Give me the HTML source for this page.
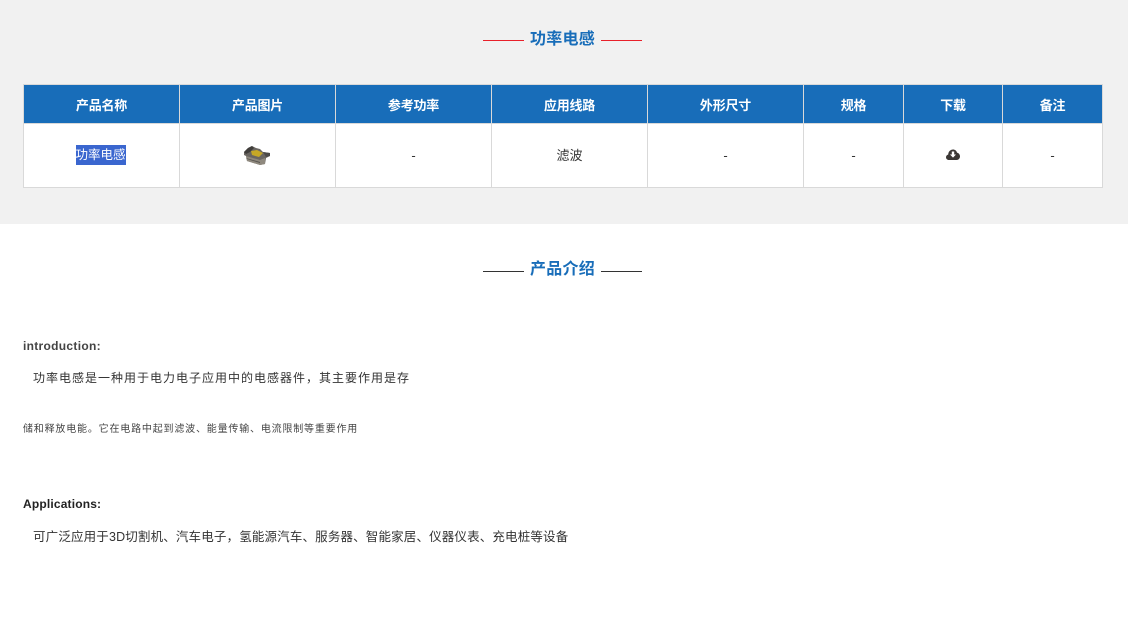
<!DOCTYPE html>
<html lang="zh-CN">
<head>
<meta charset="utf-8">
<style>
*{box-sizing:border-box;margin:0;padding:0}
html,body{width:1128px;height:619px;overflow:hidden;background:#fff}
body{position:relative;font-family:"Liberation Sans","WenQuanYi Zen Hei","Noto Sans CJK SC",sans-serif;color:#333}
.abs{position:absolute;white-space:nowrap}
#top{position:absolute;left:0;top:0;width:1128px;height:224px;background:#f1f1f1}
.title{position:absolute;left:530px;white-space:nowrap;font-size:16px;font-weight:bold;color:#186db9;line-height:24px;letter-spacing:.25px}
.ln{position:absolute;width:41px;height:1px}
table{position:absolute;left:23px;top:84px;width:1080px;height:104px;border-collapse:collapse;table-layout:fixed;background:#fff}
th,td{border:1px solid #d9d9d9;text-align:center;vertical-align:middle;font-size:13px}
th{background:#186db9;color:#fff;font-weight:bold;height:39px;font-size:13px;letter-spacing:-.2px}
td{color:#333;height:64px;font-size:13px}
.sel{background:#3a66cf;color:#fff;display:inline-block;line-height:20px;height:20px;font-size:12.5px;width:50px;position:relative;top:-1px;left:-1px;white-space:nowrap}
.up{position:relative;top:-1px}
</style>
</head>
<body>
<div id="top"></div>
<div class="title" style="top:28px">功率电感</div>
<div class="ln" style="left:483px;top:40px;background:#e8202a"></div>
<div class="ln" style="left:601px;top:40px;background:#e8202a"></div>

<table>
<colgroup>
<col style="width:156px"><col style="width:156px"><col style="width:156px"><col style="width:156px"><col style="width:156px"><col style="width:100px"><col style="width:99px"><col style="width:100px">
</colgroup>
<tr><th>产品名称</th><th>产品图片</th><th>参考功率</th><th>应用线路</th><th>外形尺寸</th><th>规格</th><th>下载</th><th>备注</th></tr>
<tr>
<td><span class="sel">功率电感</span></td>
<td>
<svg width="28" height="21" viewBox="0 0 28 21" style="display:block;margin:0 auto;position:relative;left:-1px">
<path d="M1 7 L5 3 L9 1 L13 3 L17 4 L20 7 L27 8 L27 11 L23 13 L22 19 L17 20 L4 16 L3 11 L1 10Z" fill="#6a6661"/>
<path d="M3 11 L17 15 L22 13 L22 19 L17 20 L4 16Z" fill="#8f897e"/>
<path d="M3 13 L17 17 L17 18 L4 14Z" fill="#55524e"/>
<path d="M8 6 L14 5 L20 8 L16 12 L9 10Z" fill="#c6a826"/>
<path d="M1 7 L5 3 L9 1 L11 3 L7 7 L3 9Z" fill="#3f3d3b"/>
<path d="M20 7 L27 8 L27 11 L23 12Z" fill="#4c4a48"/>
</svg>
</td>
<td>-</td>
<td><span class="up">滤波</span></td>
<td>-</td>
<td>-</td>
<td>
<svg width="14" height="11" viewBox="0 0 14 11" style="display:block;margin:0 auto;position:relative;top:-1px">
<path d="M3 11 C1 11 0 9.6 0 8.2 C0 6.8 1 5.8 2.2 5.6 C2.3 2.6 4.5 0.5 7 0.5 C9 0.5 10.5 1.7 11 3.6 C12.8 4 14 5.6 14 7.4 C14 9.4 12.6 11 10.6 11Z" fill="#3b3735"/>
<path d="M5.8 2.5 H8.2 V5.5 H10 L7 8.6 L4 5.5 H5.8Z" fill="#fff"/>
</svg>
</td>
<td>-</td>
</tr>
</table>

<div class="title" style="top:258px">产品介绍</div>
<div class="ln" style="left:483px;top:271px;background:#333"></div>
<div class="ln" style="left:601px;top:271px;background:#333"></div>

<div class="abs" style="left:23px;top:337px;font-size:12px;font-weight:bold;line-height:18px;letter-spacing:.3px;color:#444">introduction:</div>
<div class="abs" style="left:33px;top:369px;font-size:12px;line-height:18px;letter-spacing:1px;color:#333">功率电感是一种用于电力电子应用中的电感器件，其主要作用是存</div>
<div class="abs" style="left:23px;top:422px;font-size:10px;line-height:16px;letter-spacing:.81px;color:#444">储和释放电能。它在电路中起到滤波、能量传输、电流限制等重要作用</div>
<div class="abs" style="left:23px;top:495px;font-size:12px;font-weight:bold;line-height:18px;letter-spacing:.17px;color:#222">Applications:</div>
<div class="abs" style="left:33px;top:528px;font-size:12.5px;line-height:18px;letter-spacing:.16px;color:#333">可广泛应用于3D切割机、汽车电子，氢能源汽车、服务器、智能家居、仪器仪表、充电桩等设备</div>
</body>
</html>
